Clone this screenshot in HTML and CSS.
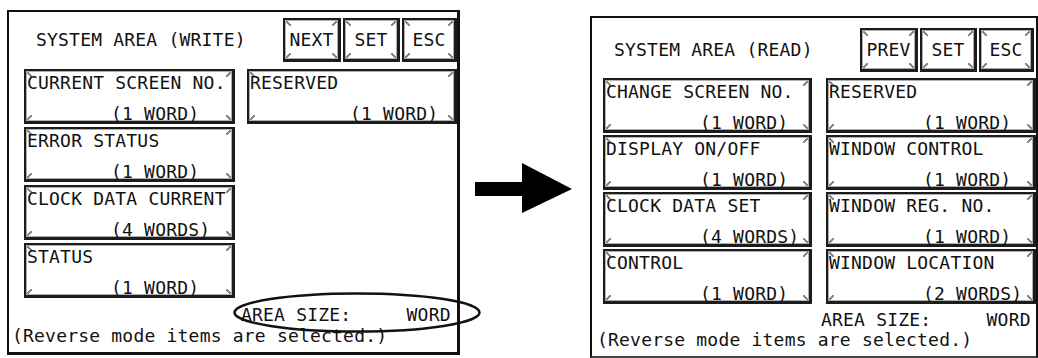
FILE: index.html
```html
<!DOCTYPE html>
<html>
<head>
    <title>System Area</title>
    <link rel="stylesheet" href="styles.css">
</head>
<body>
    <div class="stage">
        <div class="panel write">
            <div class="head">
                <span class="title">SYSTEM AREA (WRITE)</span>
                <div class="keys">
                    <span class="bevel key k1">NEXT</span>
                    <span class="bevel key k2">SET</span>
                    <span class="bevel key k3">ESC</span>
                </div>
            </div>
            <div class="grid">
                <div class="bevel item"><div>CURRENT SCREEN NO.</div><div class="size">(1 WORD)</div></div>
                <div class="bevel item"><div>ERROR STATUS</div><div class="size">(1 WORD)</div></div>
                <div class="bevel item"><div>CLOCK DATA CURRENT</div><div class="size">(4 WORDS)</div></div>
                <div class="bevel item"><div>STATUS</div><div class="size">(1 WORD)</div></div>
                <div class="bevel item"><div>RESERVED</div><div class="size far">(1 WORD)</div></div>
            </div>
            <div class="area">AREA SIZE:     WORD</div>
            <div class="note">(Reverse mode items are selected.)</div>
            <svg class="ring" width="248" height="41" viewBox="0 0 248 41">
                <ellipse cx="124" cy="20.5" rx="122.5" ry="19" fill="none" stroke="#111" stroke-width="2.5"/>
            </svg>
        </div>

        <div class="arrow">
            <svg width="97" height="50" viewBox="0 0 97 50">
                <rect x="0" y="19" width="49" height="14" fill="#000"/>
                <polygon points="47,0 97,26 47,50" fill="#000"/>
            </svg>
        </div>

        <div class="panel read">
            <div class="head">
                <span class="title">SYSTEM AREA (READ)</span>
                <div class="keys">
                    <span class="bevel key k1">PREV</span>
                    <span class="bevel key k2">SET</span>
                    <span class="bevel key k3">ESC</span>
                </div>
            </div>
            <div class="grid">
                <div class="bevel item"><div>CHANGE SCREEN NO.</div><div class="size">(1 WORD)</div></div>
                <div class="bevel item"><div>DISPLAY ON/OFF</div><div class="size">(1 WORD)</div></div>
                <div class="bevel item"><div>CLOCK DATA SET</div><div class="size">(4 WORDS)</div></div>
                <div class="bevel item"><div>CONTROL</div><div class="size">(1 WORD)</div></div>
                <div class="bevel item"><div>RESERVED</div><div class="size">(1 WORD)</div></div>
                <div class="bevel item"><div>WINDOW CONTROL</div><div class="size">(1 WORD)</div></div>
                <div class="bevel item"><div>WINDOW REG. NO.</div><div class="size">(1 WORD)</div></div>
                <div class="bevel item"><div>WINDOW LOCATION</div><div class="size">(2 WORDS)</div></div>
            </div>
            <div class="area">AREA SIZE:     WORD</div>
            <div class="note">(Reverse mode items are selected.)</div>
        </div>
    </div>
</body>
</html>
```

FILE: styles.css
```css
body { margin: 0; background: #fff; overflow: hidden; font-family: "DejaVu Sans Mono", monospace; font-size: 18px; letter-spacing: 0.2px; line-height: 16px; color: #111; }
.stage { display: flex; align-items: flex-start; }

.panel { position: relative; box-sizing: border-box; border: 2px solid #111; border-right-width: 3px; border-bottom-width: 3px; }
.write { margin: 10px 0 0 7px; width: 453px; height: 345px; }
.read { margin-top: 16px; width: 451px; height: 342px; border-right-width: 2px; border-bottom: 2px solid #444; }

.head { display: flex; align-items: center; justify-content: space-between; }
.write .head { padding: 6px 0 0 27px; }
.read .head { padding: 10px 2px 0 22px; }
.title { white-space: pre; }

.keys { display: flex; gap: 2px; }
.key { height: 44px; display: flex; align-items: center; justify-content: center; }
.k1 { width: 58px; }
.k2 { width: 57px; }
.k3 { width: 55px; }

.bevel {
    box-sizing: border-box;
    border: 2px solid #1c1c1c;
    border-right-width: 3px;
    border-bottom-width: 3px;
    box-shadow: inset 1px 1px 0 #b0b0b0, inset -1px -1px 0 #b0b0b0;
    background:
        linear-gradient(45deg, transparent 40%, #8a8a8a 40% 60%, transparent 60%) top left / 6px 6px no-repeat,
        linear-gradient(135deg, transparent 40%, #8a8a8a 40% 60%, transparent 60%) top right / 6px 6px no-repeat,
        linear-gradient(135deg, transparent 40%, #8a8a8a 40% 60%, transparent 60%) bottom left / 6px 6px no-repeat,
        linear-gradient(45deg, transparent 40%, #8a8a8a 40% 60%, transparent 60%) bottom right / 6px 6px no-repeat,
        #fff;
}

.grid { display: grid; grid-auto-flow: column; }
.write .grid { margin-top: 7px; padding-left: 15px; grid-template-columns: 211px 210px; grid-template-rows: repeat(4, 55px); column-gap: 12px; row-gap: 3px; }
.read .grid { margin-top: 6px; padding-left: 11px; grid-template-columns: 209px 210px; grid-template-rows: repeat(4, 55px); column-gap: 14px; row-gap: 2px; }

.item { height: 55px; padding: 4px 0 0 1px; white-space: pre; }
.size { margin-top: 15px; }
.write .size { padding-left: 84px; }
.write .far { padding-left: 100px; }
.read .size { padding-left: 94px; }

.area, .note { white-space: pre; }
.write .area { margin-top: 9px; padding-left: 232px; }
.write .note { margin-top: 5px; padding-left: 3px; }
.read .area { margin-top: 8px; padding-left: 229px; }
.read .note { margin-top: 4px; padding-left: 5px; }

.ring { position: absolute; left: 224px; top: 280px; }

.arrow { width: 116px; padding: 163px 0 0 15px; }
.arrow svg { display: block; }
```
